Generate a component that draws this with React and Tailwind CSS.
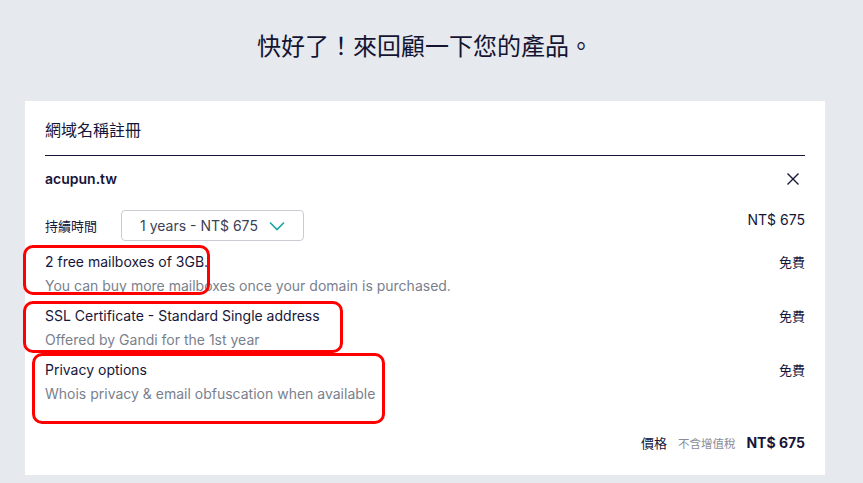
import React from "react";

const font = { fontFamily: "Inter, 'Noto Sans CJK TC', sans-serif" };

const extras = [
  { title: "2 free mailboxes of 3GB.", sub: "You can buy more mailboxes once your domain is purchased." },
  { title: "SSL Certificate - Standard Single address", sub: "Offered by Gandi for the 1st year" },
  { title: "Privacy options", sub: "Whois privacy & email obfuscation when available" },
];

const App = () => {
  return (
    <div
      className="relative min-h-screen bg-[#e6e9ed] text-[#16163a] font-['Inter','Noto_Sans_CJK_TC',sans-serif]"
    >
      <div className="w-[800px] ml-[25px] pt-[27px]">
        {/* page title */}
        <h1 className="text-center text-[24px] leading-[36px] font-['Noto_Sans_CJK_TC',sans-serif] text-[#141433]">
          快好了！來回顧一下您的產品。
        </h1>

        {/* summary card */}
        <div className="mt-[38px] bg-white px-5 pt-4 pb-[22px]">
          <h2 className="text-[16px] leading-6 pb-[14px] border-b border-[#16163a] font-['Noto_Sans_CJK_TC',sans-serif]">
            網域名稱註冊
          </h2>

          <div className="mt-[13px] flex items-center justify-between">
            <p className="text-[14px] leading-5 font-semibold">acupun.tw</p>
            <svg width="14" height="14" viewBox="0 0 14 14" className="mr-[5px]">
              <path d="M1.5 1.5 L12.5 12.5 M12.5 1.5 L1.5 12.5" stroke="#16163a" strokeWidth="1.4" fill="none" />
            </svg>
          </div>

          {/* duration */}
          <div className="mt-[21px] flex items-start justify-between">
            <div className="flex items-center">
              <span className="text-[13px] w-[76px] font-['Noto_Sans_CJK_TC',sans-serif]">持續時間</span>
              <div className="w-[183px] h-[31px] border border-[#c9ccd2] rounded-[4px] flex items-center justify-center gap-[11px] text-[14px] text-[#3d3f55]">
                <span>1 years - NT$ 675</span>
                <svg width="16" height="10" viewBox="0 0 16 10">
                  <path d="M1 1.5 L8 8.5 L15 1.5" stroke="#1aa69b" strokeWidth="1.6" fill="none" />
                </svg>
              </div>
            </div>
            <span className="text-[14px] leading-5">NT$ 675</span>
          </div>

          {/* included extras */}
          <div className="mt-[11px] flex flex-col gap-[10px]">
            {extras.map((item) => (
              <div key={item.title} className="flex items-start justify-between">
                <div>
                  <p className="text-[14px] leading-5">{item.title}</p>
                  <p className="mt-1 text-[14px] leading-5 text-[#7a7f8d]">{item.sub}</p>
                </div>
                <span className="text-[13px] leading-5 font-['Noto_Sans_CJK_TC',sans-serif]">免費</span>
              </div>
            ))}
          </div>

          {/* total */}
          <div className="mt-[29px] flex items-center justify-end gap-[11px] leading-5">
            <span className="text-[13px] font-['Noto_Sans_CJK_TC',sans-serif]">價格</span>
            <span className="text-[11.5px] text-[#8a8d99] font-['Noto_Sans_CJK_TC',sans-serif]">不含增值稅</span>
            <span className="text-[14px] font-bold">NT$ 675</span>
          </div>
        </div>
      </div>

      {/* red annotation boxes */}
      <div className="absolute left-[23px] top-[245px] w-[187px] h-[50px] border-[3px] border-[#ff0000] rounded-[10px]" />
      <div className="absolute left-[23px] top-[301px] w-[320px] h-[52px] border-[3px] border-[#ff0000] rounded-[10px]" />
      <div className="absolute left-[32px] top-[353px] w-[353px] h-[71px] border-[3px] border-[#ff0000] rounded-[10px]" />
    </div>
  );
};

export default App;
